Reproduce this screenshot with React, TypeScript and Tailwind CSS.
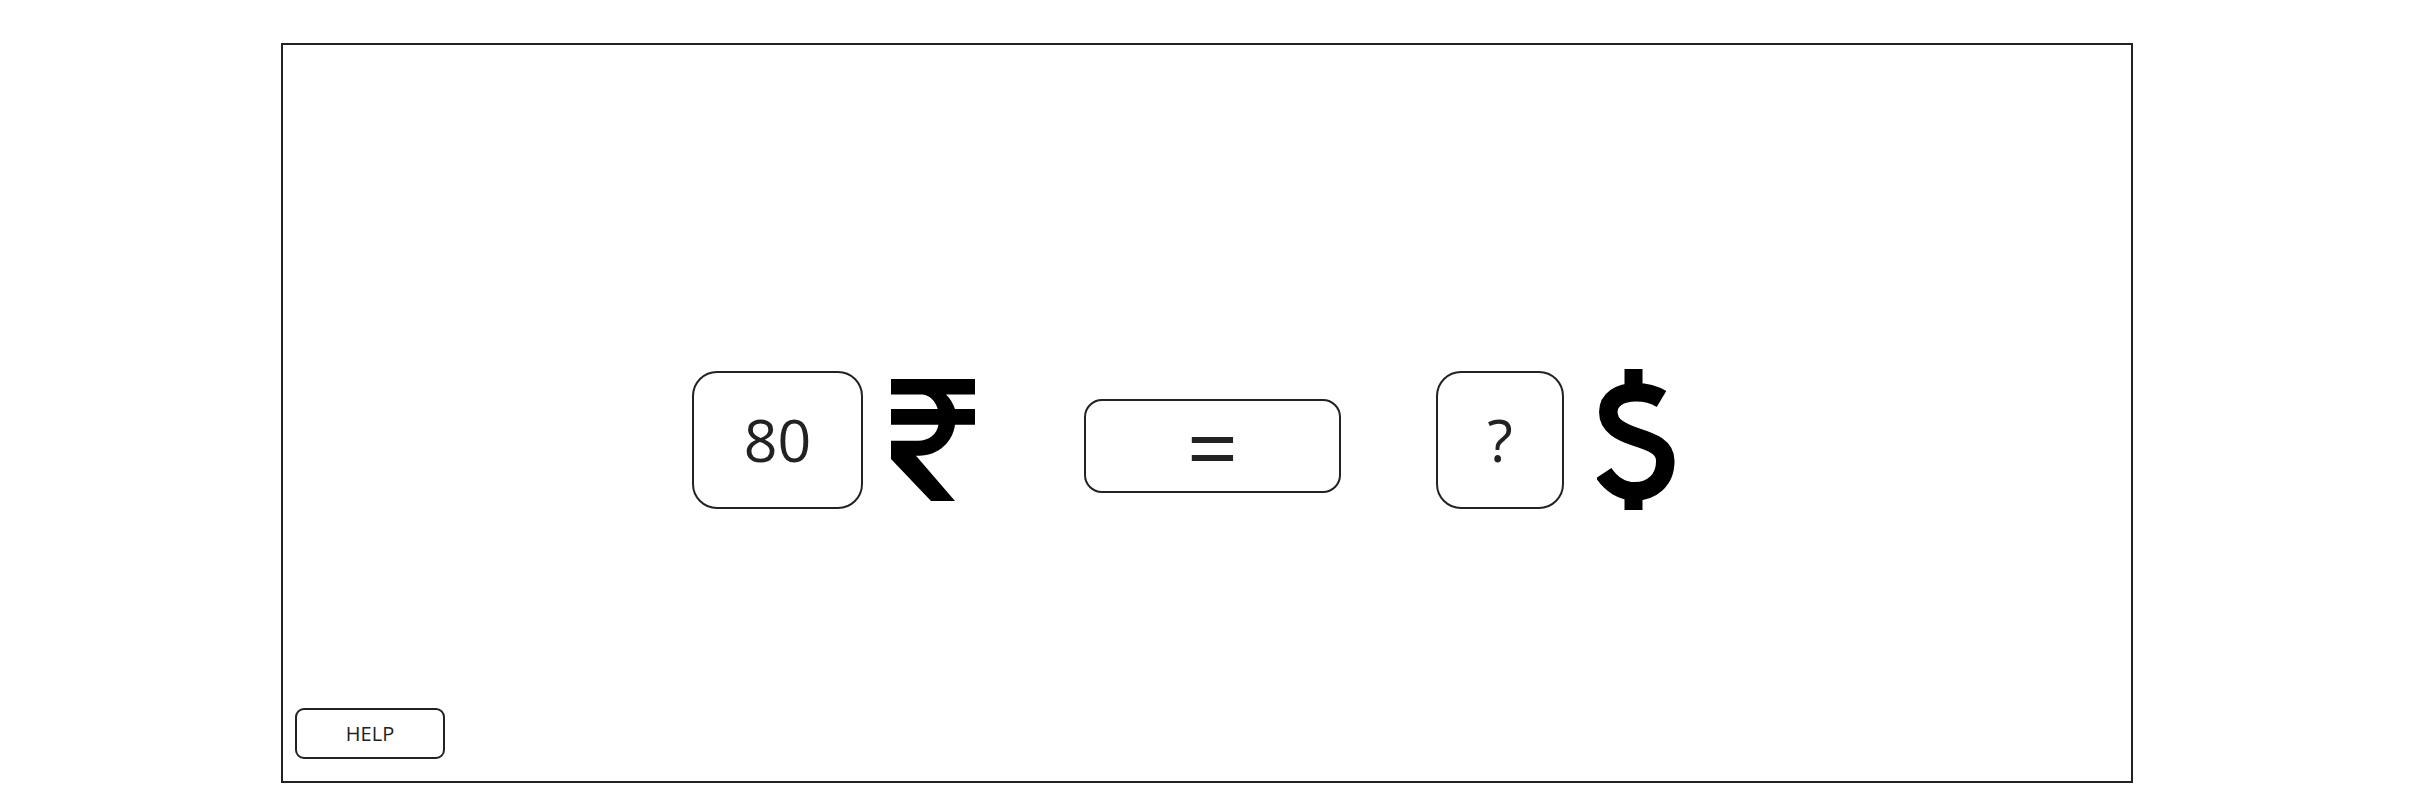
function Rupee() {
  return (
    <svg width="84" height="122" viewBox="0 0 84 122" className="block">
      <path
        fill="#000"
        d="M0 0 H84 V15.6 H55 C59 19.5 62 24.5 64 30 H84 V45.7 H64 C62 62 48 76.7 28 76.7 H25 L64 122 H40 L0 80 V61.7 H27 C38 61.7 46 55 47.5 45.7 H0 V30 H46.7 C44.5 22 38.5 16.5 31.7 15.6 H0 Z"
      />
    </svg>
  );
}

function Dollar() {
  return (
    <svg width="80" height="141" viewBox="0 0 80 141" className="block">
      <rect x="27.5" y="0" width="18" height="20" fill="#000" />
      <rect x="27.5" y="118" width="18" height="23" fill="#000" />
      <path
        fill="none"
        stroke="#000"
        strokeWidth="18.5"
        d="M64.5 30 C57 25.5 50 23.3 39 23.3 C22 23.3 11.3 31 11.3 43 C11.3 57 24 63 39 68 C56 73.5 68.3 78 68.3 92 C68.3 112 54 122.3 38 122.3 C25 122.3 14 115 6.7 104"
      />
    </svg>
  );
}

export default function App() {
  return (
    <div className="w-[2424px] h-[810px] bg-white pt-[43px] pl-[281px]" style={{ fontFamily: '"Open Sans", "Noto Sans", sans-serif' }}>
      <div className="w-[1852px] h-[740px] border-2 border-[#222222] flex flex-col">
        <div className="flex items-center pl-[409px] mt-[324px] text-[#222222]">
          <div className="w-[171px] h-[138px] border-2 border-[#222222] rounded-[25px] flex items-center justify-center text-[59px] leading-none">
            80
          </div>
          <div className="ml-[28px]">
            <Rupee />
          </div>
          <div className="ml-[109px] mt-[12px] w-[257px] h-[94px] border-2 border-[#222222] rounded-[18px] flex items-center justify-center text-[90px] leading-none">
            =
          </div>
          <div className="ml-[95px] w-[128px] h-[138px] border-2 border-[#222222] rounded-[25px] flex items-center justify-center text-[59px] leading-none">
            ?
          </div>
          <div className="ml-[33px]">
            <Dollar />
          </div>
        </div>
        <div className="mt-auto mb-[22px] ml-[12px] w-[150px] h-[51px] border-2 border-[#222222] rounded-[9px] flex items-center justify-center text-[20px] text-[#222222]">
          HELP
        </div>
      </div>
    </div>
  );
}
